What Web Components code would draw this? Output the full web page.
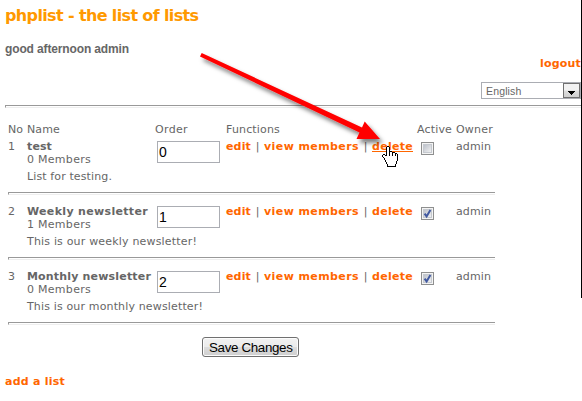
<!DOCTYPE html>
<html lang="en"><head><meta charset="utf-8"><title>phplist</title>
<style>
html,body{margin:0;height:100%;overflow:hidden;background:#fff}
body{font:11px/13px "DejaVu Sans",Verdana,sans-serif;color:#666}
</style></head><body><list-page></list-page>
<script>
class Base extends HTMLElement{
  connectedCallback(){ if(!this.shadowRoot){ this.attachShadow({mode:'open'}).innerHTML=this.render(); this.ready&&this.ready(); } }
  a(n){ return this.getAttribute(n)||''; }
}
/* Text label whose tracking is adjusted to a given width */
customElements.define('fit-text',class extends Base{
  render(){ return `<style>:host{display:inline-block;vertical-align:top;white-space:pre}span{display:inline-block}</style><span><slot></slot></span>`; }
  ready(){
    const s=this.shadowRoot.querySelector('span'), w=+this.a('w');
    const go=()=>{ s.style.letterSpacing='0'; const n=this.textContent.length;
      s.style.letterSpacing=((w-s.getBoundingClientRect().width)/n).toFixed(4)+'px'; this.style.width=w+'px'; };
    this.textContent?go():queueMicrotask(go);
  }
});
customElements.define('link-item',class extends Base{
  render(){ return `<style>:host{display:block;height:13px;color:#f60;font-weight:bold}a{display:block;color:inherit;height:12px}:host([hot]) a{border-bottom:1px solid #f60;height:11px}</style><a><fit-text w="${this.a('w')}">${this.a('label')}</fit-text></a>`; }
});
customElements.define('rule-line',class extends Base{
  render(){ return `<style>:host{display:block;box-sizing:border-box;height:3px;border:solid;border-width:1px 0 1px 1px;border-color:#999 #eee #eee #999}</style>`; }
});
customElements.define('check-box',class extends Base{
  render(){ return `<style>:host{display:block;width:13px;height:13px;margin:2px 0 0 4px}svg{display:block}</style>
  <svg width="13" height="13"><defs><linearGradient id="g" x1="0" y1="0" x2="1" y2="1"><stop offset="0" stop-color="#b9bec8"/><stop offset="1" stop-color="#f4f4f4"/></linearGradient></defs>
  <rect x=".5" y=".5" width="12" height="12" fill="#f4f4f4" stroke="#8e8f8f"/><rect x="2.5" y="2.5" width="8" height="8" fill="url(#g)" stroke="#c5c9cf"/>
  ${this.hasAttribute('checked')?'<path d="M3.6 6.6 5.6 9.4 9.4 3" fill="none" stroke="#4159a0" stroke-width="2"/>':''}</svg>`; }
});
customElements.define('order-field',class extends Base{
  render(){ return `<style>:host{display:block;box-sizing:border-box;width:63px;height:22px;margin:1px 0 0 2px;border:1px solid #abadb3;background:#fff;color:#000;font:14px/20px "Liberation Sans",Arial,sans-serif;padding-left:1px}</style>${this.a('value')}`; }
});
customElements.define('list-row',class extends Base{
  render(){ const a=n=>this.a(n); return `<style>
  :host{display:flex;flex-direction:column;height:65px}
  .r{display:grid;grid-template-columns:19px 128px 71px 191px 39px 39px;height:52px}
  .name{display:flex;flex-direction:column;white-space:nowrap}.d{margin-top:4px}.f{display:flex;align-items:flex-start}
  .s{width:13px;text-align:center;color:#666}b{height:13px}</style>
  <div class="r"><div>${a('no')}</div><div class="name"><b><fit-text w="${a('nw')}">${a('name')}</fit-text></b><fit-text w="64">${a('count')} Members</fit-text><fit-text class="d" w="${a('dw')}">${a('desc')}</fit-text></div>
  <order-field value="${a('order')}"></order-field>
  <div class="f"><link-item label="edit" w="25"></link-item><span class="s">|</span><link-item label="view members" w="95"></link-item><span class="s">|</span><link-item label="delete" w="41" ${this.hasAttribute('hot')?'hot':''}></link-item></div>
  <check-box ${this.hasAttribute('checked')?'checked':''}></check-box><div><fit-text w="35">admin</fit-text></div></div><rule-line></rule-line>`; }
});
customElements.define('language-select',class extends Base{
  render(){ return `<style>:host{display:flex;box-sizing:border-box;width:100px;height:17px;border:1px solid #abadb3;background:#fff;justify-content:space-between;padding-left:4px;font:10.5px/16px "Liberation Sans",Arial,sans-serif}
  .b{box-sizing:border-box;width:17px;height:15px;border:1px solid #707070;background:linear-gradient(#f2f2f2 48%,#ddd 52%,#cfcfcf)}svg{display:block}</style><fit-text w="35.5">English</fit-text><div class="b"><svg width="15" height="13"><path d="M4 7h7v1h-1v1h-1v1H8v1H7v-1H6V9H5V8H4z"/></svg></div>`; }
});
customElements.define('save-button',class extends Base{
  render(){ return `<style>:host{display:block;box-sizing:border-box;width:97px;height:20px;border:1px solid #707070;border-radius:3px;box-shadow:inset 0 0 0 1px #fcfcfc;background:linear-gradient(#f2f2f2,#ebebeb 49%,#ddd 51%,#cfcfcf);color:#000;font:13.33px/19px "Liberation Sans",Arial,sans-serif;padding-left:6px}</style><fit-text w="83.5">Save Changes</fit-text>`; }
});
/* Red pointer arrow and hand cursor floating above the page */
customElements.define('pointer-overlay',class extends Base{
  render(){ return `<style>:host{position:absolute;inset:0;pointer-events:none}svg{display:block}</style>
  <svg width="582" height="401"><defs><filter id="s" x="-10%" y="-10%" width="125%" height="130%"><feDropShadow dx="3" dy="4" stdDeviation="2" flood-color="#000" flood-opacity=".5"/></filter></defs>
  <g filter="url(#s)" fill="#f00"><path d="M201.7 53 362 127.5 364.7 121.5 380 139H356.5L359.5 132.5 200 56.5z"/></g>
  <g transform="translate(382 146)" shape-rendering="crispEdges"><path d="M5 1h2v5h3v1h3v1h2v1h1v6h-1v3h-1v3H5v-3H4v-2H3v-2H2v-2H1v-3h3v1h1z" fill="#fff"/><path d="M5 0h2v1H5zM4 1h1v9H4zM7 1h1v5H7zM8 5h2v1H8zM10 6h1v4h-1zM7 6h1v4H7zM11 6h2v1h-2zM13 7h1v3h-1zM14 7h1v1h-1zM15 8h1v7h-1zM14 15h1v3h-1zM13 18h1v3h-1zM5 20h9v1H5zM5 18h1v3H5zM4 16h1v2H4zM3 14h1v2H3zM2 12h1v2H2zM1 11h1v1H1zM0 9h1v2H0zM1 8h2v1H1zM3 9h1v1H3z"/></g></svg>`; }
});
customElements.define('list-page',class extends Base{
  render(){ return `<style>
  :host{display:block;position:relative;box-sizing:border-box;width:582px;height:401px;padding-left:5px;overflow:hidden}
  .edge{position:absolute;right:0;top:0;width:1px;height:298px;background:#000}
  h1{margin:0;padding-top:6px;height:20px;font-size:16px;line-height:20px;color:#f90}
  .g{margin-top:16px;height:14px;font:bold 12px/14px "Liberation Sans",Arial,sans-serif}
  .out{display:flex;justify-content:flex-end;padding-right:1px;height:25px;margin-top:1px}
  .lang{display:flex;justify-content:flex-end;padding-right:1px;height:23px}
  .t{width:487px;margin:15px 0 0 3px}.h{display:grid;grid-template-columns:19px 128px 71px 191px 39px 39px;height:17px}
  save-button{margin:2px 0 0 197px}.add{margin-top:18px}</style>
  <h1><fit-text w="193.5">phplist - the list of lists</fit-text></h1>
  <div class="g"><fit-text w="124">good afternoon admin</fit-text></div>
  <div class="out"><link-item label="logout" w="41"></link-item></div>
  <div class="lang"><language-select></language-select></div>
  <rule-line></rule-line>
  <div class="t"><div class="h"><fit-text w="15">No</fit-text><fit-text w="33">Name</fit-text><fit-text w="33">Order</fit-text><fit-text w="54">Functions</fit-text><fit-text w="35">Active</fit-text><fit-text w="37">Owner</fit-text></div>
  <list-row no="1" name="test" nw="25" count="0" desc="List for testing." dw="85" order="0" hot></list-row>
  <list-row no="2" name="Weekly newsletter" nw="121" count="1" desc="This is our weekly newsletter!" dw="170" order="1" checked></list-row>
  <list-row no="3" name="Monthly newsletter" nw="124" count="0" desc="This is our monthly newsletter!" dw="176" order="2" checked></list-row></div>
  <save-button></save-button><div class="add"><link-item label="add a list" w="60"></link-item></div>
  <div class="edge"></div><pointer-overlay></pointer-overlay>`; }
});
</script></body></html>
